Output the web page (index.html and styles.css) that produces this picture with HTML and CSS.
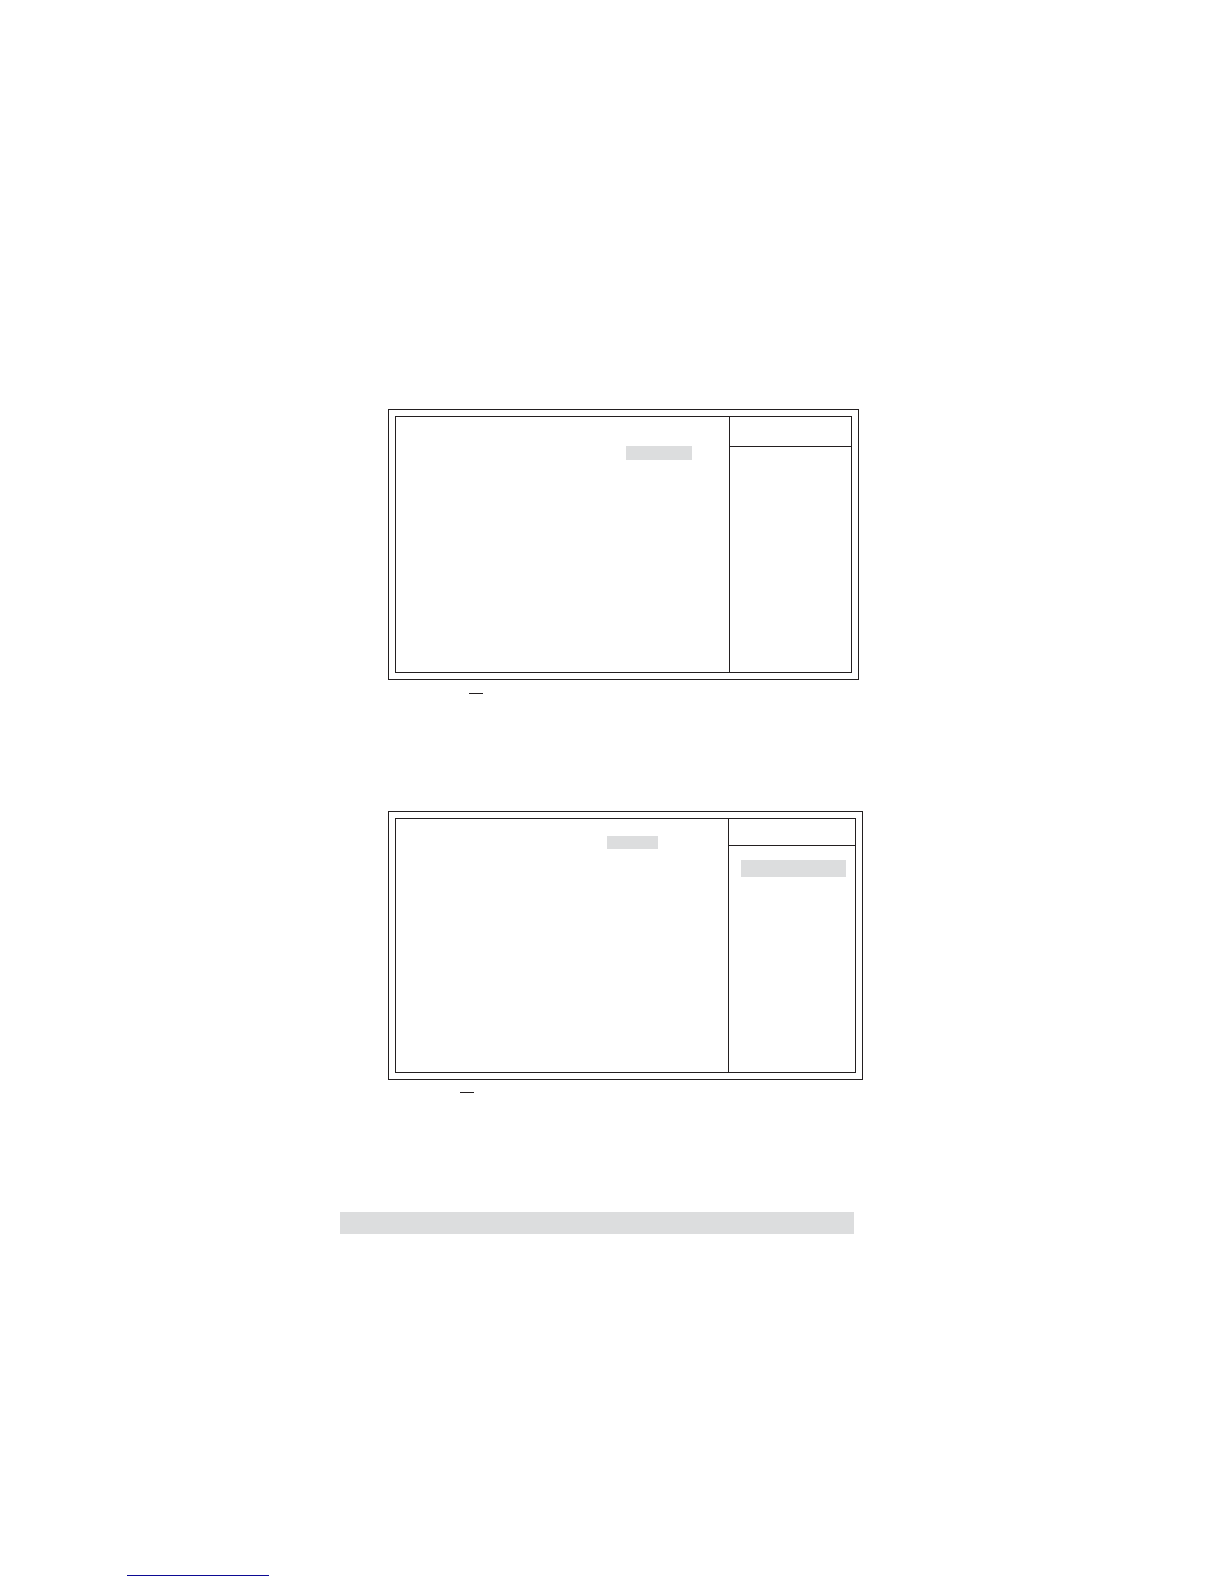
FILE: index.html
```html
<!DOCTYPE html>
<html lang="en">
<head>
<meta charset="utf-8">
<meta name="viewport" content="width=device-width, initial-scale=1">
<title>Setup screens</title>
<link rel="stylesheet" href="styles.css">
</head>
<body>
<main class="sheet">
  <section class="screen screen-first">
    <div class="frame">
      <div class="options"><div class="value"></div></div>
      <aside class="help"><div class="help-head"></div></aside>
    </div>
  </section>
  <div class="dash dash-first"></div>
  <section class="screen screen-second">
    <div class="frame">
      <div class="options"><div class="value"></div></div>
      <aside class="help"><div class="help-head"></div><div class="selected"></div></aside>
    </div>
  </section>
  <div class="dash dash-second"></div>
  <div class="band"></div>
</main>
<footer class="footer"><div class="link-rule"></div></footer>
</body>
</html>
```

FILE: styles.css
```css
:root {
  --ink: #231f20;
  --shade: #dcddde;
  --link: #0c0a94;
}

* {
  box-sizing: border-box;
}

body {
  display: flex;
  flex-direction: column;
  min-height: 100vh;
  margin: 0;
  background: #fff;
  font-family: "Liberation Sans", sans-serif;
}

.sheet {
  padding: 409px 361px 0 340px;
}

/* Double-ruled screen with an options pane and a help pane */
.screen {
  display: flex;
  margin-left: 48px;
  padding: 6px;
  border: 1px solid var(--ink);
}

.screen-first {
  min-height: 271px;
  margin-right: 4px;
}

.screen-second {
  min-height: 269px;
  margin-top: 117px;
}

.frame {
  display: flex;
  flex: 1;
  border: 1px solid var(--ink);
}

.options {
  display: flex;
  flex: 1;
  justify-content: flex-end;
  align-items: flex-start;
}

.screen-first .options {
  padding: 29px 37px 0 0;
}

.screen-second .options {
  padding: 17px 70px 0 0;
}

.value,
.selected,
.band {
  background: var(--shade);
}

.screen-first .value {
  width: 66px;
  height: 14px;
}

.screen-second .value {
  width: 51px;
  height: 13px;
}

.help {
  border-left: 1px solid var(--ink);
}

.screen-first .help {
  width: 122px;
}

.screen-second .help {
  width: 127px;
}

.help-head {
  height: 30px;
  border-bottom: 1px solid var(--ink);
}

.screen-second .help-head {
  height: 27px;
}

.selected {
  height: 17px;
  margin: 14px 9px 0 12px;
}

/* Short rules below each screen */
.dash {
  width: 14px;
  height: 1px;
  background: var(--ink);
}

.dash-first {
  margin: 13px 0 0 129px;
}

.dash-second {
  margin: 12px 0 0 120px;
}

.band {
  height: 22px;
  margin: 119px 9px 0 0;
}

.footer {
  margin-top: auto;
  padding: 0 0 8px 127px;
}

.link-rule {
  width: 142px;
  height: 1px;
  background: var(--link);
}
```
